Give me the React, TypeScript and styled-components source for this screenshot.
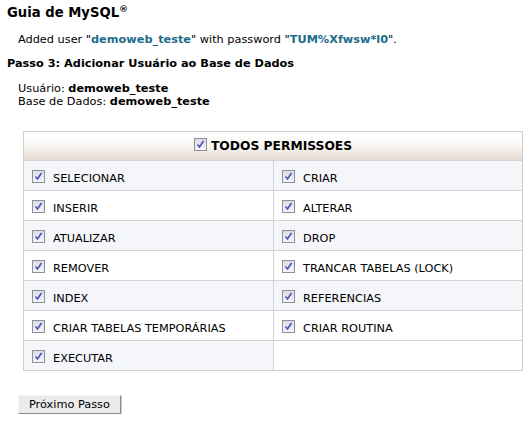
import React from 'react';
import styled, { createGlobalStyle } from 'styled-components';

const GlobalStyle = createGlobalStyle`
  body {
    margin: 0;
    background: #fff;
    font-family: "DejaVu Sans", Verdana, sans-serif;
    font-size: 11.3px;
    color: #000;
  }
`;

const Page = styled.div`
  padding: 5px 7px 0 7px;
`;

const Title = styled.h2`
  margin: 0;
  font-size: 13.2px;
  font-weight: bold;
  line-height: 16px;

  sup {
    font-size: 9px;
    vertical-align: 5px;
    line-height: 0;
  }
`;

const Message = styled.p`
  margin: 12px 0 0 11px;
  line-height: 14px;
`;

const Hl = styled.b`
  color: #1c6c8a;
`;

const Step = styled.h3`
  margin: 10px 0 0 0;
  font-size: 11.3px;
  font-weight: bold;
  line-height: 14px;
`;

const Info = styled.div`
  margin: 11px 0 0 11px;
  line-height: 13px;
`;

const Perms = styled.div`
  margin: 23px 0 0 16px;
  width: 498px;
  border: 1px solid #cfcfcf;
`;

const Head = styled.div`
  height: 28px;
  display: flex;
  align-items: center;
  justify-content: center;
  gap: 4px;
  font-size: 12.3px;
  font-weight: bold;
  background: linear-gradient(#ffffff 0%, #fbf9f7 45%, #e3d9ce 100%);
`;

const Grid = styled.div`
  display: grid;
  grid-template-columns: 249px 1fr;
`;

const Cell = styled.label<{ $shade: boolean; $right: boolean }>`
  height: 30px;
  display: flex;
  align-items: center;
  gap: 8px;
  padding-left: 8px;
  padding-top: 5px;
  box-sizing: border-box;
  background: ${(p) => (p.$shade ? '#f4f6f9' : '#ffffff')};
  border-left: ${(p) => (p.$right ? '1px solid #d3d3d3' : 'none')};
  border-top: 1px solid #d3d3d3;
`;

const Box = styled.span`
  width: 11px;
  height: 11px;
  flex: none;
  border: 1px solid #8f8f9a;
  background: linear-gradient(#dcdce4, #f4f4f8);
  display: flex;
  align-items: center;
  justify-content: center;
  margin-top: -4px;
`;

const Button = styled.button`
  margin: 24px 0 0 11px;
  height: 19px;
  padding: 0 10px;
  font-family: "DejaVu Sans", Verdana, sans-serif;
  font-size: 11.3px;
  color: #000;
  background: #ebebeb;
  border: 1px solid;
  border-color: #f5f5f5 #8a8a8a #8a8a8a #f5f5f5;
  box-shadow: 1px 1px 0 #c8c8c8;
`;

const Check = () => (
  <Box>
    <svg width="9" height="9" viewBox="0 0 9 9">
      <path d="M1.5 4.5 L3.5 7 L7.5 1" fill="none" stroke="#4b52b8" strokeWidth="1.6" />
    </svg>
  </Box>
);

const left = ['SELECIONAR', 'INSERIR', 'ATUALIZAR', 'REMOVER', 'INDEX', 'CRIAR TABELAS TEMPORÁRIAS', 'EXECUTAR'];
const right = ['CRIAR', 'ALTERAR', 'DROP', 'TRANCAR TABELAS (LOCK)', 'REFERENCIAS', 'CRIAR ROUTINA', ''];

export default function App() {
  return (
    <Page>
      <GlobalStyle />
      <Title>
        Guia de MySQL<sup>®</sup>
      </Title>
      <Message>
        Added user "<Hl>demoweb_teste</Hl>" with password "<Hl>TUM%Xfwsw*l0</Hl>".
      </Message>
      <Step>Passo 3: Adicionar Usuário ao Base de Dados</Step>
      <Info>
        Usuário: <b>demoweb_teste</b>
        <br />
        Base de Dados: <b>demoweb_teste</b>
      </Info>
      <Perms>
        <Head>
          <Check />
          TODOS PERMISSOES
        </Head>
        <Grid>
          {left.map((l, i) => (
            <React.Fragment key={l}>
              <Cell $shade={i % 2 === 0} $right={false}>
                <Check />
                {l}
              </Cell>
              <Cell $shade={i % 2 === 0 && right[i] !== ''} $right>
                {right[i] && <Check />}
                {right[i]}
              </Cell>
            </React.Fragment>
          ))}
        </Grid>
      </Perms>
      <Button>Próximo Passo</Button>
    </Page>
  );
}
